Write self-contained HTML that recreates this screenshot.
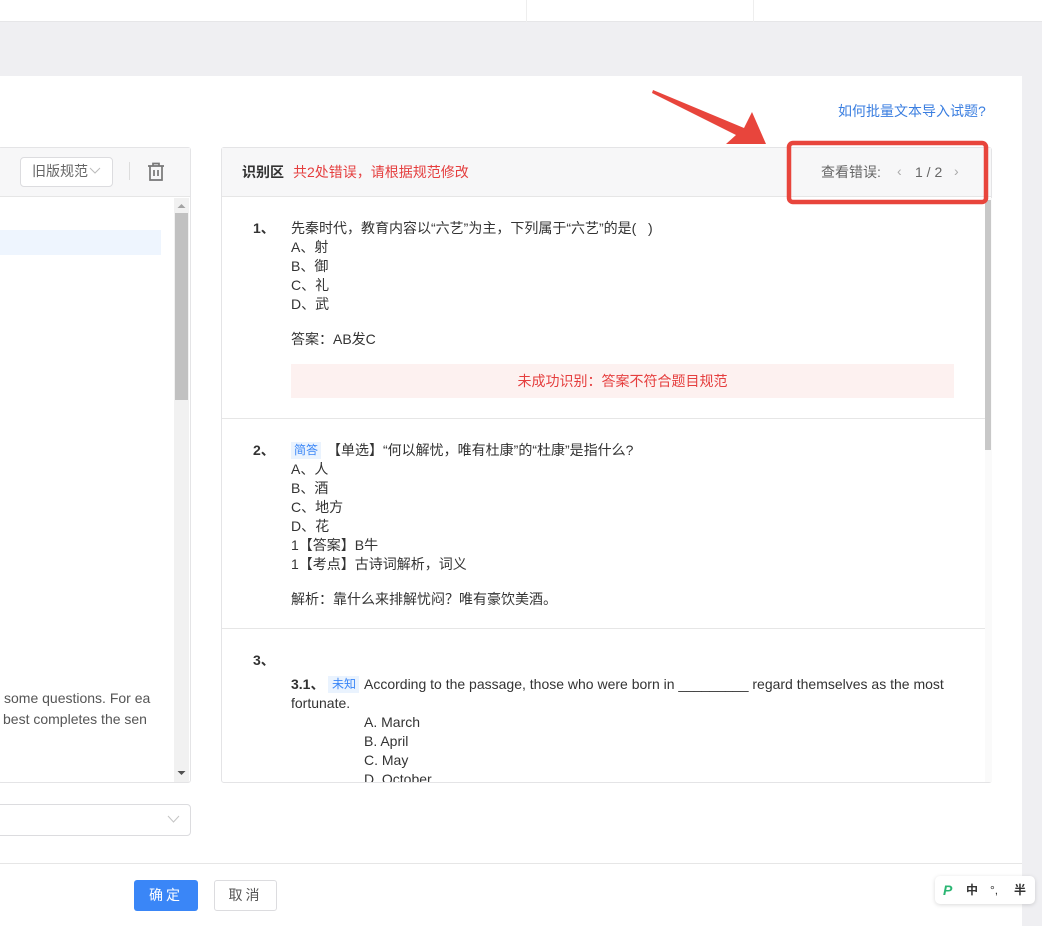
<!DOCTYPE html>
<html><head><meta charset="utf-8"><style>
*{margin:0;padding:0;box-sizing:border-box}
body{width:1042px;height:926px;position:relative;overflow:hidden;background:#fff;font-family:"Liberation Sans","Noto Sans CJK SC",sans-serif;font-size:14px;color:#333}
.a{position:absolute}
.t{position:absolute;white-space:nowrap;line-height:19px}
</style></head><body>
<div class="a" style="left:0;top:0;width:1042px;height:22px;background:#fff;border-bottom:1px solid #e6e6e8"></div>
<div class="a" style="left:526px;top:0;width:1px;height:22px;background:#eee"></div>
<div class="a" style="left:753px;top:0;width:1px;height:22px;background:#eee"></div>
<div class="a" style="left:0;top:22px;width:1042px;height:54px;background:#efeff2"></div>
<div class="a" style="left:1022px;top:22px;width:20px;height:904px;background:#efeff2"></div>

<div class="t" style="left:838px;top:102px;color:#3a7ee0">如何批量文本导入试题?</div>

<!-- left panel -->
<div class="a" style="left:-2px;top:147px;width:193px;height:636px;border:1px solid #e4e4e6;border-radius:3px"></div>
<div class="a" style="left:-1px;top:148px;width:191px;height:49px;background:#f7f7f8;border-bottom:1px solid #e6e6e6"></div>
<div class="a" style="left:20px;top:157px;width:93px;height:30px;border:1px solid #dcdcdf;border-radius:4px;background:#fff"></div>
<div class="t" style="left:32px;top:162px;color:#666;font-size:14px">旧版规范</div>
<svg class="a" style="left:89px;top:167px" width="12" height="8"><path d="M1 1 L6 6 L11 1" fill="none" stroke="#bbb"/></svg>
<div class="a" style="left:129px;top:162px;width:1px;height:18px;background:#ddd"></div>
<svg class="a" style="left:147px;top:162px" width="18" height="20"><path d="M1 4 H17 M6 4 V1.5 H12 V4 M3 4 V18 H15 V4 M7 8 V14 M11 8 V14" fill="none" stroke="#777" stroke-width="1.7"/></svg>
<div class="a" style="left:0;top:230px;width:161px;height:25px;background:#eef5fe"></div>
<div class="a" style="left:174px;top:198px;width:15px;height:584px;background:#f1f1f1"></div>
<div class="a" style="left:175px;top:213px;width:13px;height:187px;background:#c1c1c1"></div>
<svg class="a" style="left:177px;top:203px" width="9" height="6"><path d="M0.5 5 L4.5 1 L8.5 5Z" fill="#a3a3a3"/></svg>
<svg class="a" style="left:177px;top:770px" width="9" height="6"><path d="M0.5 1 L4.5 5 L8.5 1Z" fill="#505050"/></svg>
<div class="t" style="left:4px;top:689px;font-size:14px;color:#555">some questions. For ea</div>
<div class="t" style="left:3px;top:710px;font-size:14px;color:#555">best completes the sen</div>
<div class="a" style="left:-4px;top:804px;width:195px;height:32px;border:1px solid #dcdcdf;border-radius:4px"></div>
<svg class="a" style="left:167px;top:815px" width="13" height="9"><path d="M1 1 L6.5 7 L12 1" fill="none" stroke="#c4c4c4"/></svg>

<!-- right panel -->
<div class="a" style="left:221px;top:147px;width:771px;height:636px;border:1px solid #e4e4e6;border-radius:3px"></div>
<div class="a" style="left:222px;top:148px;width:769px;height:49px;background:#f7f7f8;border-bottom:1px solid #e6e6e6"></div>
<div class="t" style="left:242px;top:163px;font-weight:bold;color:#333">识别区</div>
<div class="t" style="left:293px;top:163px;color:#e53e3e">共2处错误，请根据规范修改</div>
<div class="t" style="left:821px;top:163px;color:#666">查看错误:</div>
<div class="t" style="left:897px;top:162px;color:#aaa">&lsaquo;</div>
<div class="t" style="left:915px;top:163px;color:#666">1 / 2</div>
<div class="t" style="left:954px;top:162px;color:#aaa">&rsaquo;</div>
<div class="a" style="left:985px;top:198px;width:7px;height:584px;background:#fafafa"></div>
<div class="a" style="left:985px;top:200px;width:6px;height:250px;background:#c8c8c8"></div>

<div class="t" style="left:253px;top:219px;font-weight:bold">1、</div>
<div class="t" style="left:291px;top:219px">先秦时代，教育内容以“六艺”为主，下列属于“六艺”的是(&nbsp;&nbsp;&nbsp;)</div>
<div class="t" style="left:291px;top:238px">A、射</div>
<div class="t" style="left:291px;top:257px">B、御</div>
<div class="t" style="left:291px;top:276px">C、礼</div>
<div class="t" style="left:291px;top:295px">D、武</div>
<div class="t" style="left:291px;top:330px">答案：AB发C</div>
<div class="a" style="left:291px;top:364px;width:663px;height:34px;background:#fdf1f0"></div>
<div class="t" style="left:291px;top:372px;width:663px;text-align:center;color:#e53e3e">未成功识别：答案不符合题目规范</div>
<div class="a" style="left:222px;top:418px;width:763px;height:1px;background:#e6e6e6"></div>

<div class="t" style="left:253px;top:441px;font-weight:bold">2、</div>
<div class="a" style="left:291px;top:442px;width:30px;height:17px;background:#eaf3fe"></div>
<div class="t" style="left:294px;top:441px;color:#3a86f7;font-size:12px">简答</div>
<div class="t" style="left:327px;top:441px">【单选】“何以解忧，唯有杜康”的“杜康”是指什么?</div>
<div class="t" style="left:291px;top:460px">A、人</div>
<div class="t" style="left:291px;top:479px">B、酒</div>
<div class="t" style="left:291px;top:498px">C、地方</div>
<div class="t" style="left:291px;top:517px">D、花</div>
<div class="t" style="left:291px;top:536px">1【答案】B牛</div>
<div class="t" style="left:291px;top:555px">1【考点】古诗词解析，词义</div>
<div class="t" style="left:291px;top:590px">解析：靠什么来排解忧闷？唯有豪饮美酒。</div>
<div class="a" style="left:222px;top:628px;width:763px;height:1px;background:#e6e6e6"></div>

<div class="t" style="left:253px;top:651px;font-weight:bold">3、</div>
<div class="t" style="left:291px;top:675px;font-weight:bold">3.1、</div>
<div class="a" style="left:328px;top:676px;width:31px;height:17px;background:#eaf3fe"></div>
<div class="t" style="left:332px;top:675px;color:#3a86f7;font-size:12px">未知</div>
<div class="t" style="left:364px;top:675px">According to the passage, those who were born in _________ regard themselves as the most</div>
<div class="t" style="left:291px;top:694px">fortunate.</div>
<div class="t" style="left:364px;top:713px">A. March</div>
<div class="t" style="left:364px;top:732px">B. April</div>
<div class="t" style="left:364px;top:751px">C. May</div>
<div class="a" style="left:364px;top:770px;height:12px;overflow:hidden"><div style="line-height:19px">D. October</div></div>

<!-- footer -->
<div class="a" style="left:0;top:863px;width:1022px;height:1px;background:#e6e6e6"></div>
<div class="a" style="left:134px;top:880px;width:64px;height:31px;background:#3a86f7;border-radius:3px;color:#fff;text-align:center;line-height:31px;font-size:14px;letter-spacing:3px">确定</div>
<div class="a" style="left:214px;top:880px;width:63px;height:31px;border:1px solid #dcdcdf;border-radius:3px;color:#555;text-align:center;line-height:29px;font-size:14px;letter-spacing:3px">取消</div>

<div class="a" style="left:935px;top:876px;width:100px;height:28px;background:#fff;border-radius:5px;box-shadow:0 1px 4px rgba(0,0,0,.15)"></div>
<div class="t" style="left:943px;top:881px;color:#2bb673;font-weight:bold;font-style:italic">P</div>
<div class="t" style="left:966px;top:881px;font-size:12px;color:#333;font-weight:bold">中</div>
<div class="t" style="left:990px;top:881px;font-size:12px">°,</div>
<div class="t" style="left:1014px;top:881px;font-size:12px;font-weight:bold">半</div>

<!-- annotation -->
<svg class="a" style="left:640px;top:80px" width="360" height="130">
<path d="M13 10 L104 48 L112 32 L126 64 L86 64 L96 55 L12 13 Z" fill="#e8453c"/>
<rect x="149" y="63" width="197" height="59" rx="4" fill="none" stroke="#e8453c" stroke-width="4.5"/>
</svg>
</body></html>
